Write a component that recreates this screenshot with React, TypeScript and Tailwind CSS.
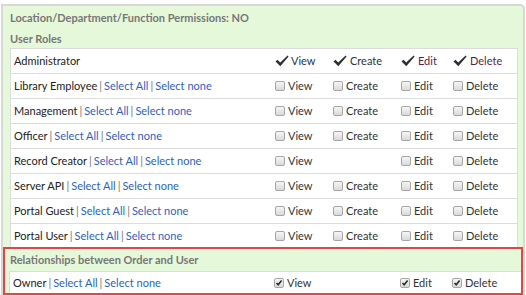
import React from "react";

const roles = [
  { name: "Library Employee", create: true },
  { name: "Management", create: true },
  { name: "Officer", create: true },
  { name: "Record Creator", create: false },
  { name: "Server API", create: true },
  { name: "Portal Guest", create: true },
  { name: "Portal User", create: true },
];

function Tick() {
  return (
    <svg width="14" height="12" viewBox="0 0 14 12" className="shrink-0">
      <polygon points="0.5,6.5 2.5,4.8 5.2,7.6 12.6,0.4 13.6,1.4 5.3,11.2" fill="#2f2f2f" />
    </svg>
  );
}

function Box({ checked }: { checked?: boolean }) {
  return (
    <span className="relative inline-block w-[10px] h-[10px] shrink-0 rounded-[2px] border border-[#a6a6a6] bg-gradient-to-b from-[#f6f6f6] to-[#d9d9d9]">
      {checked && (
        <svg width="8" height="8" viewBox="0 0 8 8" className="absolute left-[0px] top-[0px]">
          <path d="M1.5 4 L3.2 5.8 L6.6 1.6" stroke="#2a2a2a" strokeWidth="1.6" fill="none" />
        </svg>
      )}
    </span>
  );
}

function Perm({ label, checked }: { label: string; checked?: boolean }) {
  return (
    <div className="flex items-center gap-[3px]">
      <Box checked={checked} />
      <span className="text-[#333]">{label}</span>
    </div>
  );
}

function Links() {
  return (
    <>
      <span className="text-[#777] mx-[2px]">|</span>
      <span className="text-[#2f5fc4]">Select All</span>
      <span className="text-[#777] mx-[2px]">|</span>
      <span className="text-[#2f5fc4]">Select none</span>
    </>
  );
}

const cols = "grid grid-cols-[264px_58px_68px_52px_1fr] items-center";

export default function App() {
  return (
    <div
      className="w-[526px] h-[295px] bg-white pt-[4px] pl-[1px] overflow-hidden text-[11px] leading-[14px]"
      style={{ fontFamily: "Lato, 'Open Sans', sans-serif" }}
    >
      <div className="w-[524px] h-[295px] border-2 border-b-0 border-[#d8d8d8] rounded-tr-[5px] bg-[#e6f8da] pl-[7px] pr-[5px]">
        <div className="h-[24px] flex items-center font-bold text-[#777]">
          Location/Department/Function Permissions: NO
        </div>
        <div className="h-[18px] flex items-center font-bold text-[#777]">User Roles</div>
        <div className="bg-white border-t border-x border-[#dcdcdc]">
          <div className={"h-[25px] border-b border-[#dcdcdc] " + cols}>
            <div className="pl-[3px] text-[#222]">Administrator</div>
            <div className="flex items-center gap-[2px] text-[#2a3444]">
              <Tick />
              View
            </div>
            <div className="flex items-center gap-[3px] text-[#2a3444]">
              <Tick />
              Create
            </div>
            <div className="flex items-center gap-[3px] text-[#5a1f4e]">
              <Tick />
              Edit
            </div>
            <div className="flex items-center gap-[3px] text-[#5a1f4e]">
              <Tick />
              Delete
            </div>
          </div>
          {roles.map((r, i) => (
            <div
              key={r.name}
              className={
                i === roles.length - 1
                  ? "h-[23px] " + cols
                  : "h-[25px] border-b border-[#dcdcdc] " + cols
              }
            >
              <div className="pl-[3px] text-[#222] whitespace-nowrap">
                {r.name}
                <Links />
              </div>
              <Perm label="View" />
              {r.create ? <Perm label="Create" /> : <div />}
              <Perm label="Edit" />
              <Perm label="Delete" />
            </div>
          ))}
        </div>
        <div className="ml-[-7px] mr-[-5px] border-2 border-[#e04848] bg-[#e6f8da]">
          <div className="h-[22px] flex items-center pl-[5px] font-bold text-[#777]">
            Relationships between Order and User
          </div>
          <div className={"h-[22px] ml-[4px] bg-white border-t border-l border-[#dcdcdc] " + cols}>
            <div className="pl-[3px] text-[#222] whitespace-nowrap">
              Owner
              <Links />
            </div>
            <Perm label="View" checked />
            <div />
            <Perm label="Edit" checked />
            <Perm label="Delete" checked />
          </div>
        </div>
      </div>
    </div>
  );
}
